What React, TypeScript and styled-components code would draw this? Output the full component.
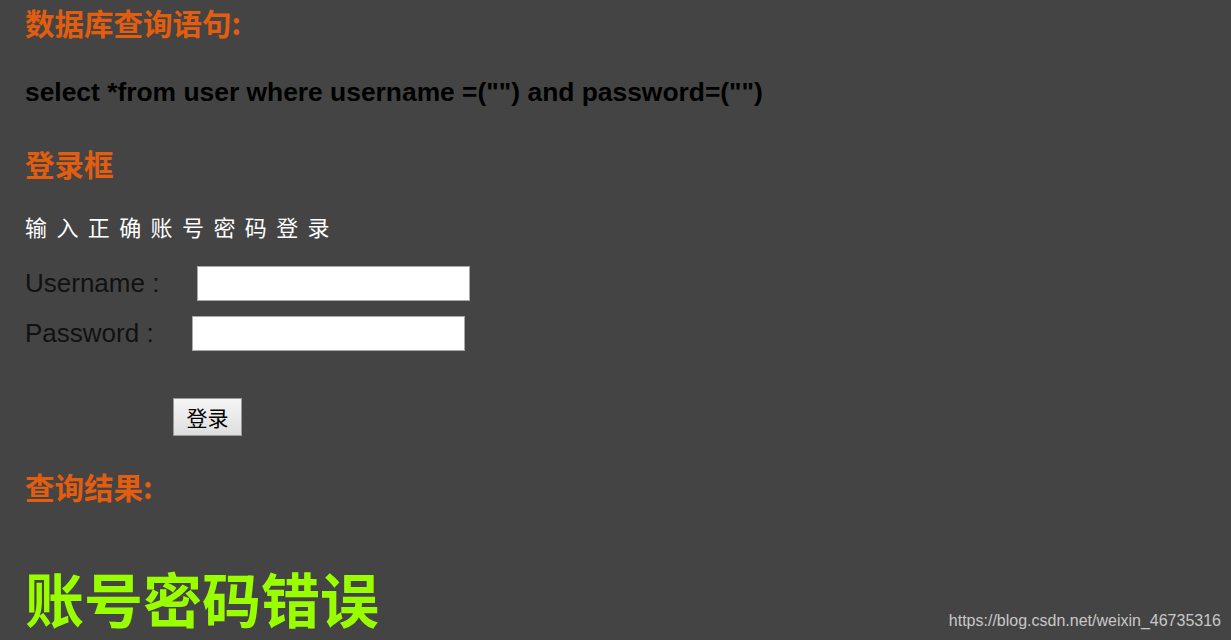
import React from 'react'
import styled, { createGlobalStyle } from 'styled-components'

const GlobalStyle = createGlobalStyle`
  html, body {
    margin: 0;
    padding: 0;
    background: #444444;
  }
  body {
    font-family: "Liberation Sans", Arial, "Noto Sans CJK SC", sans-serif;
  }
`;

const Page = styled.div`
  position: relative;
  display: flex;
  flex-direction: column;
  align-items: flex-start;
  padding: 0 25px;
  height: 640px;
  box-sizing: border-box;
  overflow: hidden;
`;

const Heading = styled.h2<{ $top: number }>`
  margin: ${p => p.$top}px 0 0;
  font-family: "Noto Sans CJK SC", "Liberation Sans", sans-serif;
  font-size: 29.5px;
  font-weight: 700;
  line-height: 44px;
  color: #e35d0f;
`;

const Query = styled.p`
  margin: 24px 0 0;
  font-family: "Liberation Sans", Arial, sans-serif;
  font-size: 26.4px;
  font-weight: 700;
  line-height: 48px;
  color: #000;
`;

const Hint = styled.p`
  margin: 21px 0 0;
  font-family: "Noto Sans CJK SC", sans-serif;
  font-size: 22px;
  letter-spacing: 9.4px;
  line-height: 40px;
  color: #fff;
`;

const Field = styled.div<{ $top: number }>`
  display: flex;
  align-items: center;
  margin-top: ${p => p.$top}px;
  height: 35px;
`;

const Label = styled.label`
  font-family: "Liberation Sans", Arial, sans-serif;
  font-size: 26px;
  color: #111;
  margin-right: 38px;
  white-space: pre;
`;

const Input = styled.input`
  width: 273px;
  height: 35px;
  box-sizing: border-box;
  border: 1px solid #a9a9a9;
  background: #fff;
  padding: 0 4px;
  outline: none;
`;

const Submit = styled.button`
  margin: 47px 0 0 148px;
  width: 69px;
  height: 38px;
  box-sizing: border-box;
  border: 1px solid #9a9a9a;
  border-radius: 0;
  background: linear-gradient(#f6f6f6, #dedede);
  font-family: "Noto Sans CJK SC", sans-serif;
  font-size: 21px;
  color: #000;
  padding: 0;
`;

const Result = styled.div`
  margin-top: 50px;
  font-family: "Noto Sans CJK SC", sans-serif;
  font-size: 59px;
  font-weight: 700;
  line-height: 80px;
  color: #99ff00;
`;

const Watermark = styled.span`
  position: absolute;
  right: 10px;
  bottom: 10px;
  font-family: "Liberation Sans", Arial, sans-serif;
  font-size: 16px;
  color: #c8c8c8;
`;

const App = () => {
  return (
    <>
      <GlobalStyle />
      <Page>
        <Heading $top={0}>数据库查询语句:</Heading>
        <Query>select *from user where username =("") and password=("")</Query>
        <Heading $top={25}>登录框</Heading>
        <Hint>输入正确账号密码登录</Hint>
        <Field $top={20}>
          <Label>Username :</Label>
          <Input type="text" />
        </Field>
        <Field $top={15}>
          <Label>Password :</Label>
          <Input type="password" />
        </Field>
        <Submit>登录</Submit>
        <Heading $top={28}>查询结果:</Heading>
        <Result>账号密码错误</Result>
        <Watermark>https://blog.csdn.net/weixin_46735316</Watermark>
      </Page>
    </>
  )
}

export default App
